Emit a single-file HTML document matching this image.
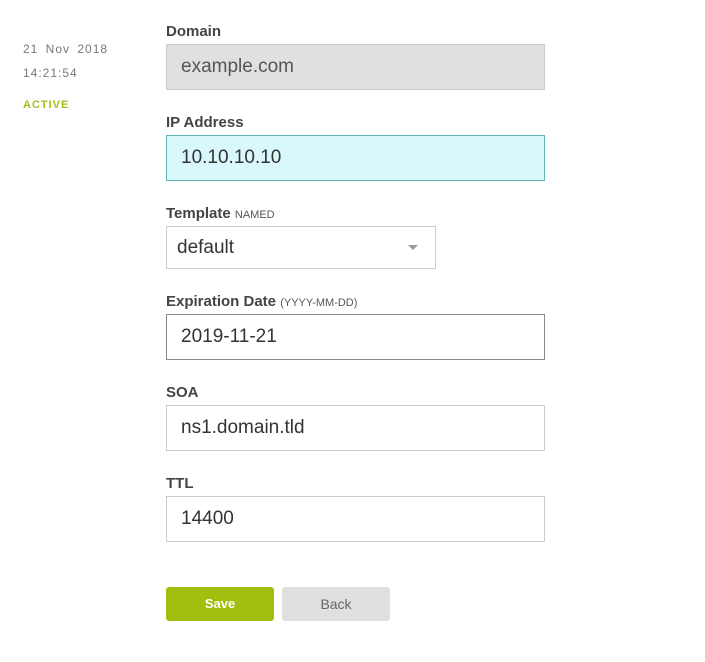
<!DOCTYPE html>
<html><head><style>
body{margin:0;width:705px;height:662px;background:#fff;font-family:"Liberation Sans",Arial,sans-serif;position:relative;overflow:hidden}
.a{position:absolute}
.lbl{font-size:15px;font-weight:bold;color:#444}
.sm{font-size:11px;font-weight:normal;color:#555}
.box{position:absolute;box-sizing:border-box;border:1px solid #ccc;font-size:19px;color:#333;padding-left:14px;display:flex;align-items:center}
</style></head><body>
<div class="a" style="left:23px;top:42px;font-size:12px;color:#777;letter-spacing:1px;word-spacing:3px">21 Nov 2018</div>
<div class="a" style="left:23px;top:66px;font-size:12px;color:#777;letter-spacing:1px">14:21:54</div>
<div class="a" style="left:23px;top:99px;font-size:11px;font-weight:bold;color:#a3be1a;letter-spacing:1px">ACTIVE</div>

<div class="a lbl" style="left:166px;top:23px">Domain</div>
<div class="box" style="left:166px;top:44px;width:379px;height:46px;background:#e0e0e0;color:#555">example.com</div>

<div class="a lbl" style="left:166px;top:114px">IP Address</div>
<div class="box" style="left:166px;top:135px;width:379px;height:46px;background:#d8f8fc;border-color:#5fb8b8">10.10.10.10</div>

<div class="a lbl" style="left:166px;top:205px">Template <span class="sm">NAMED</span></div>
<div class="box" style="left:166px;top:226px;width:270px;height:43px;padding-left:10px">default</div>
<div class="a" style="left:408px;top:245px;width:0;height:0;border-left:5px solid transparent;border-right:5px solid transparent;border-top:5px solid #999"></div>

<div class="a lbl" style="left:166px;top:293px">Expiration Date <span class="sm">(YYYY-MM-DD)</span></div>
<div class="box" style="left:166px;top:314px;width:379px;height:46px;border-color:#888">2019-11-21</div>

<div class="a lbl" style="left:166px;top:384px">SOA</div>
<div class="box" style="left:166px;top:405px;width:379px;height:46px">ns1.domain.tld</div>

<div class="a lbl" style="left:166px;top:475px">TTL</div>
<div class="box" style="left:166px;top:496px;width:379px;height:46px">14400</div>

<div class="a" style="left:166px;top:587px;width:108px;height:34px;background:#a3be0c;border-radius:3px;color:#fff;font-size:13px;font-weight:bold;text-align:center;line-height:34px">Save</div>
<div class="a" style="left:282px;top:587px;width:108px;height:34px;background:#e0e0e0;border-radius:3px;color:#666;font-size:14px;text-align:center;line-height:34px">Back</div>
</body></html>
